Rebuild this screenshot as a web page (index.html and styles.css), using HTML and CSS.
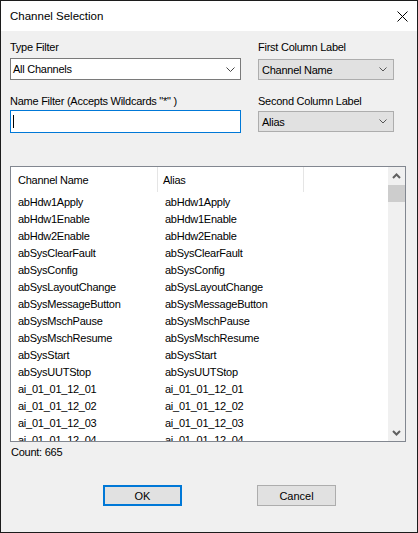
FILE: index.html
```html
<!DOCTYPE html>
<html>
<head>
<meta charset="utf-8">
<link rel="stylesheet" href="styles.css">
</head>
<body>
<div class="window">
  <div class="titlebar">
    <span class="title">Channel Selection</span>
    <svg class="close" width="11" height="11" viewBox="0 0 11 11"><path d="M0.5 0.5 L10.5 10.5 M10.5 0.5 L0.5 10.5" stroke="#000" stroke-width="1" fill="none"/></svg>
  </div>
  <div class="client">
    <div class="filters">
      <div class="col col-left">
        <div class="lbl">Type Filter</div>
        <div class="combo combo-white">
          <span class="combo-text">All Channels</span>
          <svg class="chev" width="9" height="5" viewBox="0 0 9 5"><path d="M0.5 0.5 L4.5 4.5 L8.5 0.5" stroke="#444" stroke-width="1" fill="none"/></svg>
        </div>
        <div class="lbl lbl-second">Name Filter (Accepts Wildcards "*" )</div>
        <div class="textbox"><span class="caret"></span></div>
      </div>
      <div class="col col-right">
        <div class="lbl">First Column Label</div>
        <div class="combo combo-gray combo-first">
          <span class="combo-text">Channel Name</span>
          <svg class="chev chev-small" width="8" height="5" viewBox="0 0 8 5"><path d="M0.5 0.5 L4 4 L7.5 0.5" stroke="#555" stroke-width="1" fill="none"/></svg>
        </div>
        <div class="lbl lbl-second">Second Column Label</div>
        <div class="combo combo-gray combo-second">
          <span class="combo-text">Alias</span>
          <svg class="chev chev-small" width="8" height="5" viewBox="0 0 8 5"><path d="M0.5 0.5 L4 4 L7.5 0.5" stroke="#555" stroke-width="1" fill="none"/></svg>
        </div>
      </div>
    </div>

    <div class="listview">
      <div class="lv-main">
        <div class="lv-header">
          <div class="hcell c1">Channel Name</div>
          <div class="hcell c2">Alias</div>
          <div class="hcell c3"></div>
        </div>
        <div class="lv-rows">
          <div class="row"><span class="c1">abHdw1Apply</span><span class="c2">abHdw1Apply</span></div>
          <div class="row"><span class="c1">abHdw1Enable</span><span class="c2">abHdw1Enable</span></div>
          <div class="row"><span class="c1">abHdw2Enable</span><span class="c2">abHdw2Enable</span></div>
          <div class="row"><span class="c1">abSysClearFault</span><span class="c2">abSysClearFault</span></div>
          <div class="row"><span class="c1">abSysConfig</span><span class="c2">abSysConfig</span></div>
          <div class="row"><span class="c1">abSysLayoutChange</span><span class="c2">abSysLayoutChange</span></div>
          <div class="row"><span class="c1">abSysMessageButton</span><span class="c2">abSysMessageButton</span></div>
          <div class="row"><span class="c1">abSysMschPause</span><span class="c2">abSysMschPause</span></div>
          <div class="row"><span class="c1">abSysMschResume</span><span class="c2">abSysMschResume</span></div>
          <div class="row"><span class="c1">abSysStart</span><span class="c2">abSysStart</span></div>
          <div class="row"><span class="c1">abSysUUTStop</span><span class="c2">abSysUUTStop</span></div>
          <div class="row"><span class="c1">ai_01_01_12_01</span><span class="c2">ai_01_01_12_01</span></div>
          <div class="row"><span class="c1">ai_01_01_12_02</span><span class="c2">ai_01_01_12_02</span></div>
          <div class="row"><span class="c1">ai_01_01_12_03</span><span class="c2">ai_01_01_12_03</span></div>
          <div class="row"><span class="c1">ai_01_01_12_04</span><span class="c2">ai_01_01_12_04</span></div>
        </div>
      </div>
      <div class="scrollbar">
        <div class="sb-btn">
          <svg width="9" height="6" viewBox="0 0 9 6"><path d="M1 5 L4.5 1.5 L8 5" stroke="#606060" stroke-width="2" fill="none"/></svg>
        </div>
        <div class="sb-thumb"></div>
        <div class="sb-track"></div>
        <div class="sb-btn">
          <svg width="9" height="6" viewBox="0 0 9 6"><path d="M1 1 L4.5 4.5 L8 1" stroke="#606060" stroke-width="2" fill="none"/></svg>
        </div>
      </div>
    </div>

    <div class="count">Count: 665</div>

    <div class="buttons">
      <div class="btn btn-default">OK</div>
      <div class="btn">Cancel</div>
    </div>
  </div>
</div>
</body>
</html>
```

FILE: styles.css
```css
* { box-sizing: border-box; }

html, body {
  margin: 0;
  padding: 0;
  background: #f0f0f0;
}

.window {
  width: 418px;
  height: 533px;
  border: 1px solid #1c1c1c;
  display: flex;
  flex-direction: column;
  font-family: "Liberation Sans", Arial, sans-serif;
  font-size: 11px;
  letter-spacing: -0.25px;
  color: #000;
  overflow: hidden;
}

.titlebar {
  height: 30px;
  flex: none;
  background: #fff;
  display: flex;
  align-items: center;
  padding-left: 9px;
  padding-right: 9px;
}

.title {
  font-size: 11.5px;
  letter-spacing: 0;
  line-height: 30px;
}

.close {
  margin-left: auto;
  display: block;
}

.client {
  flex: 1;
  background: #f0f0f0;
  padding: 9px 0 0 9px;
  display: flex;
  flex-direction: column;
}

.filters {
  display: flex;
  gap: 17px;
}

.col {
  display: flex;
  flex-direction: column;
}

.col-left { width: 231px; }
.col-right { width: 136px; }

.lbl {
  height: 14px;
  line-height: 14px;
  white-space: nowrap;
}

.lbl-second { margin-top: 14px; }

.combo {
  display: flex;
  align-items: center;
  white-space: nowrap;
}

.combo-white {
  margin-top: 4px;
  height: 22px;
  background: #fff;
  border: 1px solid #7a7a7a;
  padding-left: 2px;
  padding-right: 5px;
}

.combo-gray {
  height: 21px;
  background: #e1e1e1;
  border: 1px solid #adadad;
  padding-left: 3px;
  padding-right: 6px;
}

.combo-first { margin-top: 5px; }
.combo-second { margin-top: 3px; }

.combo-text { flex: 1; }

.chev { display: block; }

.textbox {
  margin-top: 2px;
  height: 23px;
  background: #fff;
  border: 1px solid #0078d7;
  display: flex;
  align-items: center;
  padding-left: 2px;
}

.caret {
  display: block;
  width: 1px;
  height: 13px;
  background: #000;
}

.listview {
  margin-top: 33px;
  width: 396px;
  height: 276px;
  border: 1px solid #828790;
  background: #fff;
  display: flex;
  overflow: hidden;
}

.lv-main {
  flex: 1;
  overflow: hidden;
}

.lv-header {
  height: 26px;
  display: flex;
}

.hcell {
  height: 25px;
  line-height: 26px;
  white-space: nowrap;
}

.hcell.c1 {
  width: 147px;
  padding-left: 7px;
  border-right: 1px solid #e5e5e5;
}

.hcell.c2 {
  width: 146px;
  padding-left: 5px;
  border-right: 1px solid #e5e5e5;
}

.hcell.c3 { flex: 1; }

.lv-rows { padding-top: 1px; }

.row {
  height: 17px;
  line-height: 17px;
  display: flex;
  white-space: nowrap;
}

.row .c1 {
  width: 147px;
  padding-left: 7px;
}

.row .c2 {
  padding-left: 7px;
}

.scrollbar {
  width: 17px;
  flex: none;
  background: #f0f0f0;
  display: flex;
  flex-direction: column;
}

.sb-btn {
  height: 17px;
  flex: none;
  display: flex;
  align-items: center;
  justify-content: center;
}

.sb-thumb {
  height: 17px;
  flex: none;
  background: #cdcdcd;
  margin-top: 1px;
}

.sb-track { flex: 1; }

.count {
  margin-top: 3px;
  height: 14px;
  line-height: 14px;
  padding-left: 1px;
}

.buttons {
  margin-top: 26px;
  margin-left: 93px;
  display: flex;
  gap: 75px;
}

.btn {
  width: 79px;
  height: 21px;
  background: #e1e1e1;
  border: 1px solid #adadad;
  display: flex;
  align-items: center;
  justify-content: center;
  letter-spacing: 0;
}

.btn-default {
  border: 2px solid #0078d7;
}
```
